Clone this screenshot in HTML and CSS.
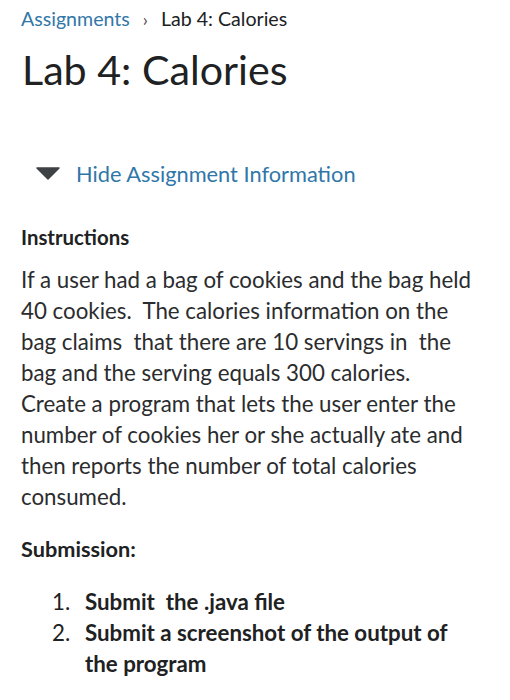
FILE: index.html
```html
<!DOCTYPE html>
<html>
<head>
<meta charset="utf-8">
<link rel="stylesheet" href="styles.css">
</head>
<body>
<div class="page">
  <nav class="crumbs">
    <a class="crumb-link">Assignments</a>
    <span class="sep">›</span>
    <span class="crumb-current">Lab 4: Calories</span>
  </nav>
  <h1 class="title">Lab 4: Calories</h1>
  <div class="toggle">
    <svg class="tri" width="24" height="13" viewBox="0 0 24 13"><path d="M1 1 L23 1 L12 12 Z" fill="#3f4245" stroke="#3f4245" stroke-width="1.5" stroke-linejoin="round"/></svg>
    <span class="toggle-text">Hide Assignment Information</span>
  </div>
  <h2 class="section">Instructions</h2>
  <p class="body">If a user had a bag of cookies and the bag held 40&nbsp;cookies.&nbsp; The calories information on the bag claims&nbsp; that there are 10 servings in&nbsp; the bag and the serving equals 300 calories. Create a program that lets the user enter the number of cookies her or she actually ate and then reports the number of total calories consumed.</p>
  <h3 class="sub">Submission:</h3>
  <ol class="list">
    <li>Submit&nbsp; the .java file</li>
    <li>Submit a screenshot of the output of the program</li>
  </ol>
</div>
</body>
</html>
```
FILE: styles.css
```css
html, body {
  margin: 0;
  padding: 0;
  background: #ffffff;
}
.page {
  font-family: Lato, "Liberation Sans", sans-serif;
  color: #202122;
  width: 455px;
  padding: 0 0 0 21px;
}
.crumbs {
  display: flex;
  align-items: baseline;
  font-size: 19.6px;
  line-height: 24px;
  padding-top: 7px;
  white-space: nowrap;
}
.crumb-link {
  color: #3277a8;
}
.sep {
  color: #494c4e;
  margin: 0 13px 0 13px;
  font-size: 18px;
}
.crumb-current {
  color: #202122;
}
.title {
  font-weight: 400;
  font-size: 41.2px;
  line-height: 52px;
  margin: 12px 0 0 1px;
  color: #202122;
}
.toggle {
  display: flex;
  align-items: center;
  gap: 16px;
  margin: 62px 0 0 15px;
  height: 32px;
}
.tri {
  display: block;
}
.toggle-text {
  color: #2f77a8;
  font-size: 21.8px;
  white-space: nowrap;
}
.section {
  font-size: 20.4px;
  font-weight: 700;
  line-height: 24px;
  margin: 36px 0 0 0;
}
.body {
  font-size: 22.3px;
  line-height: 31px;
  margin: 15px 0 0 0;
  color: #2b2c2e;
}
.sub {
  font-size: 21.7px;
  font-weight: 700;
  line-height: 28px;
  margin: 23px 0 0 0;
}
.list {
  font-size: 22.3px;
  font-weight: 700;
  line-height: 31px;
  margin: 23px 0 0 0;
  padding-left: 55px;
}
.list li::marker {
  font-weight: 400;
}
.list li {
  padding-left: 9px;
}
```
